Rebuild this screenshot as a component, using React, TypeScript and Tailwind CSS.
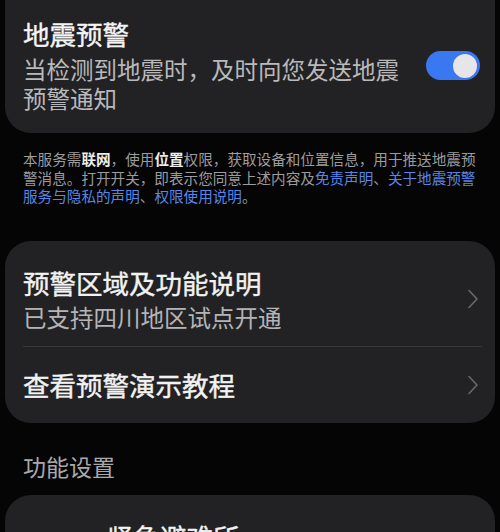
const cjk = { fontFamily: '"Noto Sans CJK SC", "Noto Sans", sans-serif' };

function Toggle() {
  return (
    <div className="flex h-[29px] w-[54px] shrink-0 items-center justify-end rounded-full bg-[#3a78f2] px-[3px]">
      <div className="h-[24px] w-[24px] rounded-full bg-[#e6e6e8]" />
    </div>
  );
}

function Chevron() {
  return (
    <svg width="12" height="20" viewBox="0 0 12 20" fill="none" className="shrink-0">
      <path d="M2 1.5 L10 10 L2 18.5" stroke="#69696b" strokeWidth="1.6" strokeLinecap="round" strokeLinejoin="round" />
    </svg>
  );
}

export default function App() {
  return (
    <div className="min-h-[532px] w-[500px] overflow-hidden bg-[#050505] px-[5px]" style={cjk}>
      {/* alert switch card */}
      <div className="flex items-center justify-between rounded-b-[26px] bg-[#222224] pl-[18px] pr-[15px] pt-[18px] pb-[20px]">
        <div className="w-[380px]">
          <div className="text-[26.5px] leading-[32px] text-[#f4f4f4] [-webkit-text-stroke:0.4px_#f4f4f4]">地震预警</div>
          <div className="mt-[5px] text-[23.5px] leading-[29px] text-[#b9b9bb]">
            当检测到地震时，及时向您发送地震预警通知
          </div>
        </div>
        <Toggle />
      </div>

      {/* notice */}
      <p className="mt-[17px] pl-[18px] pr-[12px] text-[14.6px] leading-[18.5px] text-[#9c9c9e]">
        本服务需<span className="font-bold text-[#ededed]">联网</span>，使用
        <span className="font-bold text-[#ededed]">位置</span>
        权限，获取设备和位置信息，用于推送地震预警消息。打开开关，即表示您同意上述内容及
        <span className="text-[#5a85e8]">免责声明</span>、
        <span className="text-[#5a85e8]">关于地震预警服务与隐私的声明</span>、
        <span className="text-[#5a85e8]">权限使用说明</span>。
      </p>

      {/* info card */}
      <div className="mt-[35px] rounded-[26px] bg-[#222224] pl-[18px]">
        <div className="flex items-center justify-between pr-[16px] pt-[26px] pb-[14px]">
          <div>
            <div className="text-[26.5px] leading-[32px] text-[#f2f2f2] [-webkit-text-stroke:0.4px_#f2f2f2]">预警区域及功能说明</div>
            <div className="mt-[4px] text-[23.5px] leading-[29px] text-[#b4b4b6]">已支持四川地区试点开通</div>
          </div>
          <Chevron />
        </div>
        <div className="mr-[13px] h-px bg-[#37373a]" />
        <div className="flex h-[76px] items-center justify-between pr-[16px]">
          <div className="text-[26.5px] leading-[32px] text-[#f2f2f2] [-webkit-text-stroke:0.4px_#f2f2f2]">查看预警演示教程</div>
          <Chevron />
        </div>
      </div>

      {/* section */}
      <div className="mt-[29px] pl-[18px] text-[23px] leading-[29px] text-[#a9a9ab]">功能设置</div>

      <div className="mt-[14px] h-[80px] rounded-t-[26px] bg-[#222224] pl-[102px] pt-[26px]">
        <div className="text-[26.5px] leading-[32px] text-[#f2f2f2] [-webkit-text-stroke:0.4px_#f2f2f2]">紧急避难所</div>
      </div>
    </div>
  );
}
